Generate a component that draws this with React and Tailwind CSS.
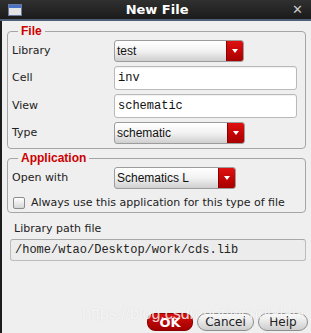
import React from "react";

const sans = { fontFamily: '"DejaVu Sans", sans-serif' };

function Dropdown({ value, width }) {
  return (
    <div
      className={`flex h-[22px] ${width} rounded-[3px] border border-[#9c9c9c] bg-gradient-to-b from-[#ffffff] via-[#f2f2f2] to-[#cfcfcf] overflow-hidden`}
    >
      <div className="flex-1 flex items-center pl-[2px] text-[12px] text-[#111] font-['Liberation_Sans',Arial,sans-serif]">
        {value}
      </div>
      <div className="w-[17px] flex items-center justify-center bg-gradient-to-b from-[#e01010] to-[#a80000] border-l border-[#8a0000]">
        <div className="w-0 h-0 border-l-[3px] border-r-[3px] border-t-[4px] border-l-transparent border-r-transparent border-t-white" />
      </div>
    </div>
  );
}

function TextInput({ value }) {
  return (
    <div className="flex items-center h-[24px] flex-1 rounded-[3px] border border-[#b9b9b9] bg-white pl-[3px] text-[12px] text-[#111] font-['Liberation_Mono',monospace] shadow-[inset_0_1px_1px_rgba(0,0,0,0.06)]">
      {value}
    </div>
  );
}

function Row({ label, children }) {
  return (
    <div className="flex items-center">
      <div className="w-[102px] text-[11px] text-[#222]" style={sans}>
        {label}
      </div>
      {children}
    </div>
  );
}

function GrayButton({ children, width }) {
  return (
    <button
      className={`${width} h-[18px] rounded-[9px] border border-[#8e8e8e] bg-gradient-to-b from-[#ffffff] to-[#cdcdcd] text-[12px] leading-none text-[#222]`}
      style={sans}
    >
      {children}
    </button>
  );
}

export default function App() {
  return (
    <div className="relative w-[311px] h-[333px] flex flex-col bg-[#efefef] overflow-hidden">
      {/* title bar */}
      <div className="h-[21px] flex items-center bg-gradient-to-b from-[#303030] to-[#1b1b1b] border-b-2 border-[#4f5f7a] px-[8px]">
        <div className="w-[14px] h-[12px] border border-[#6a7aa0] bg-[#e4e4e4] flex flex-col">
          <div className="h-[3px] bg-[#4a73c8]" />
        </div>
        <div
          className="flex-1 text-center text-[13px] font-bold text-white"
          style={sans}
        >
          New File
        </div>
        <div className="text-[13px] font-bold text-[#c8c8c8] leading-none" style={sans}>
          ✕
        </div>
      </div>

      <div className="flex-1 flex flex-col border-l-2 border-[#1c1c1c] pl-[5px] pr-[5px]">
        <fieldset className="mt-[3px] rounded-[4px] border border-[#a5a5a5] pl-[4px] pr-[8px] pb-[4px]">
          <legend className="ml-[6px] px-[3px] text-[12px] leading-[14px] font-bold text-[#cc0000] font-['Liberation_Sans',Arial,sans-serif]">
            File
          </legend>
          <div className="flex flex-col gap-[4px] pt-[2px]">
            <Row label="Library">
              <Dropdown value="test" width="w-[130px]" />
            </Row>
            <Row label="Cell">
              <TextInput value="inv" />
            </Row>
            <Row label="View">
              <TextInput value="schematic" />
            </Row>
            <Row label="Type">
              <Dropdown value="schematic" width="w-[131px]" />
            </Row>
          </div>
        </fieldset>

        <fieldset className="mt-[2px] rounded-[4px] border border-[#a5a5a5] pl-[4px] pr-[8px]">
          <legend className="ml-[6px] px-[3px] text-[12px] leading-[14px] font-bold text-[#cc0000] font-['Liberation_Sans',Arial,sans-serif]">
            Application
          </legend>
          <div className="flex flex-col pt-[2px]">
            <Row label="Open with">
              <Dropdown value="Schematics L" width="w-[122px]" />
            </Row>
            <div className="flex items-center h-[16px] mt-[6px] mb-[1px]">
              <div className="ml-[1px] w-[12px] h-[12px] rounded-[2px] border border-[#8c8c8c] bg-gradient-to-b from-[#ffffff] to-[#d6d6d6]" />
              <span className="ml-[6px] text-[11px] text-[#222]" style={sans}>
                Always use this application for this type of file
              </span>
            </div>
          </div>
        </fieldset>

        <div className="mt-[8px] ml-[7px] text-[11px] leading-[16px] text-[#222]" style={sans}>
          Library path file
        </div>
        <div className="mt-[2px] ml-[3px] h-[22px] flex items-center rounded-[3px] border border-[#bcbcbc] border-t-[#a8a8a8] bg-[#ececec] pl-[4px] text-[12px] text-[#222] font-['Liberation_Mono',monospace]">
          /home/wtao/Desktop/work/cds.lib
        </div>

        <div className="mt-auto mb-[2px] -mr-[2px] flex justify-end gap-[4px]">
          <button
            className="w-[46px] h-[18px] rounded-[8px] bg-gradient-to-b from-[#d81010] to-[#a00000] border border-[#8c0000] text-[13px] font-bold text-white leading-none"
            style={sans}
          >
            OK
          </button>
          <GrayButton width="w-[57px]">Cancel</GrayButton>
          <GrayButton width="w-[50px]">Help</GrayButton>
        </div>
      </div>

      <div className="absolute left-[82px] top-[302px] text-[16px] text-white/80 font-['Liberation_Sans',Arial,sans-serif] [text-shadow:0_0_1px_rgba(0,0,0,0.15)] pointer-events-none">
        https://blog.csdn.net/wch0lalala
      </div>
    </div>
  );
}
